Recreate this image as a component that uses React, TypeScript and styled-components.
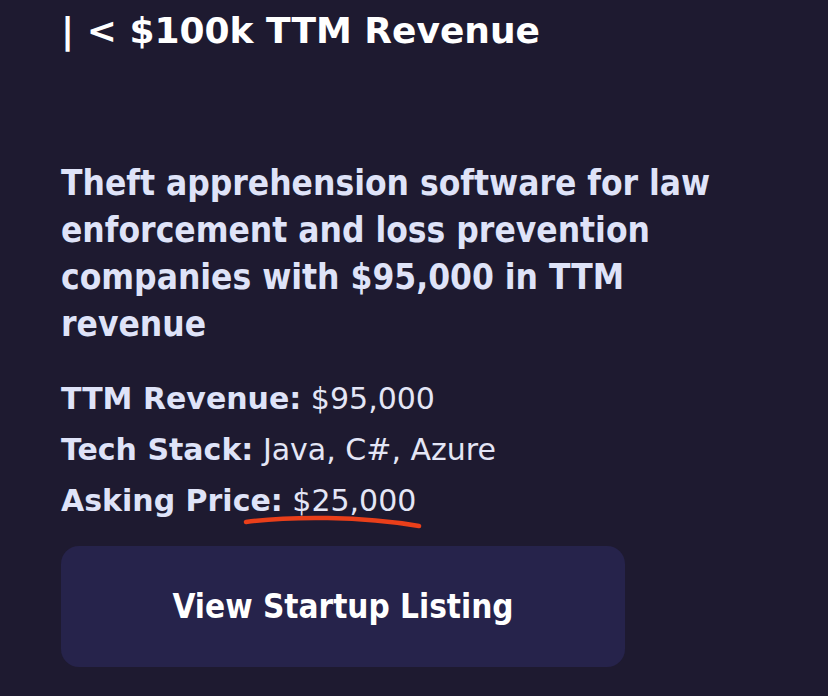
import React from 'react'
import styled, { createGlobalStyle } from 'styled-components'

const GlobalStyle = createGlobalStyle`
  html, body {
    margin: 0;
    padding: 0;
    background: #1e1a30;
  }
  body {
    font-family: 'DejaVu Sans', Verdana, sans-serif;
    -webkit-font-smoothing: antialiased;
  }
`

const Page = styled.div`
  width: 828px;
  height: 696px;
  overflow: hidden;
  background: #1e1a30;
  box-sizing: border-box;
  padding: 9px 0 0 61px;
`

const Heading = styled.h2`
  margin: 0;
  font-family: 'DejaVu Sans', Verdana, sans-serif;
  font-weight: 700;
  font-size: 36px;
  line-height: 44px;
  color: #ffffff;
  white-space: nowrap;
`

const Summary = styled.h3`
  margin: 107px 0 0;
  width: 675px;
  font-family: 'DejaVu Sans Condensed', 'DejaVu Sans', sans-serif;
  font-stretch: condensed;
  font-weight: 700;
  font-size: 35px;
  line-height: 47px;
  color: #dfe3f8;
`

const Facts = styled.div`
  margin-top: 25px;
  display: flex;
  flex-direction: column;
`

const Fact = styled.div`
  position: relative;
  font-family: 'DejaVu Sans', Verdana, sans-serif;
  font-size: 30px;
  line-height: 51px;
  color: #e4e6f6;
  white-space: nowrap;

  b {
    font-weight: 700;
    color: #dfe3f8;
  }
`

const Scribble = styled.svg`
  position: absolute;
  left: 180px;
  top: 38px;
  pointer-events: none;
`

const ListingButton = styled.button`
  margin-top: 20px;
  width: 564px;
  height: 121px;
  border: none;
  border-radius: 18px;
  background: #26234b;
  color: #ffffff;
  font-family: 'DejaVu Sans Condensed', 'DejaVu Sans', sans-serif;
  font-stretch: condensed;
  font-weight: 700;
  font-size: 33px;
  cursor: pointer;
`

export default function App() {
  return (
    <>
      <GlobalStyle />
      <Page>
        <Heading>| &lt; $100k TTM Revenue</Heading>
        <Summary>
          Theft apprehension software for law enforcement and loss prevention
          companies with $95,000 in TTM revenue
        </Summary>
        <Facts>
          <Fact>
            <b>TTM Revenue:</b> $95,000
          </Fact>
          <Fact>
            <b>Tech Stack:</b> Java, C#, Azure
          </Fact>
          <Fact>
            <b>Asking Price:</b> $25,000
            <Scribble width="190" height="22" viewBox="0 0 190 22">
              <path
                d="M5 9 C 50 3, 120 3, 178 13"
                fill="none"
                stroke="#ea3f1a"
                strokeWidth="4.5"
                strokeLinecap="round"
              />
            </Scribble>
          </Fact>
        </Facts>
        <ListingButton>View Startup Listing</ListingButton>
      </Page>
    </>
  )
}
